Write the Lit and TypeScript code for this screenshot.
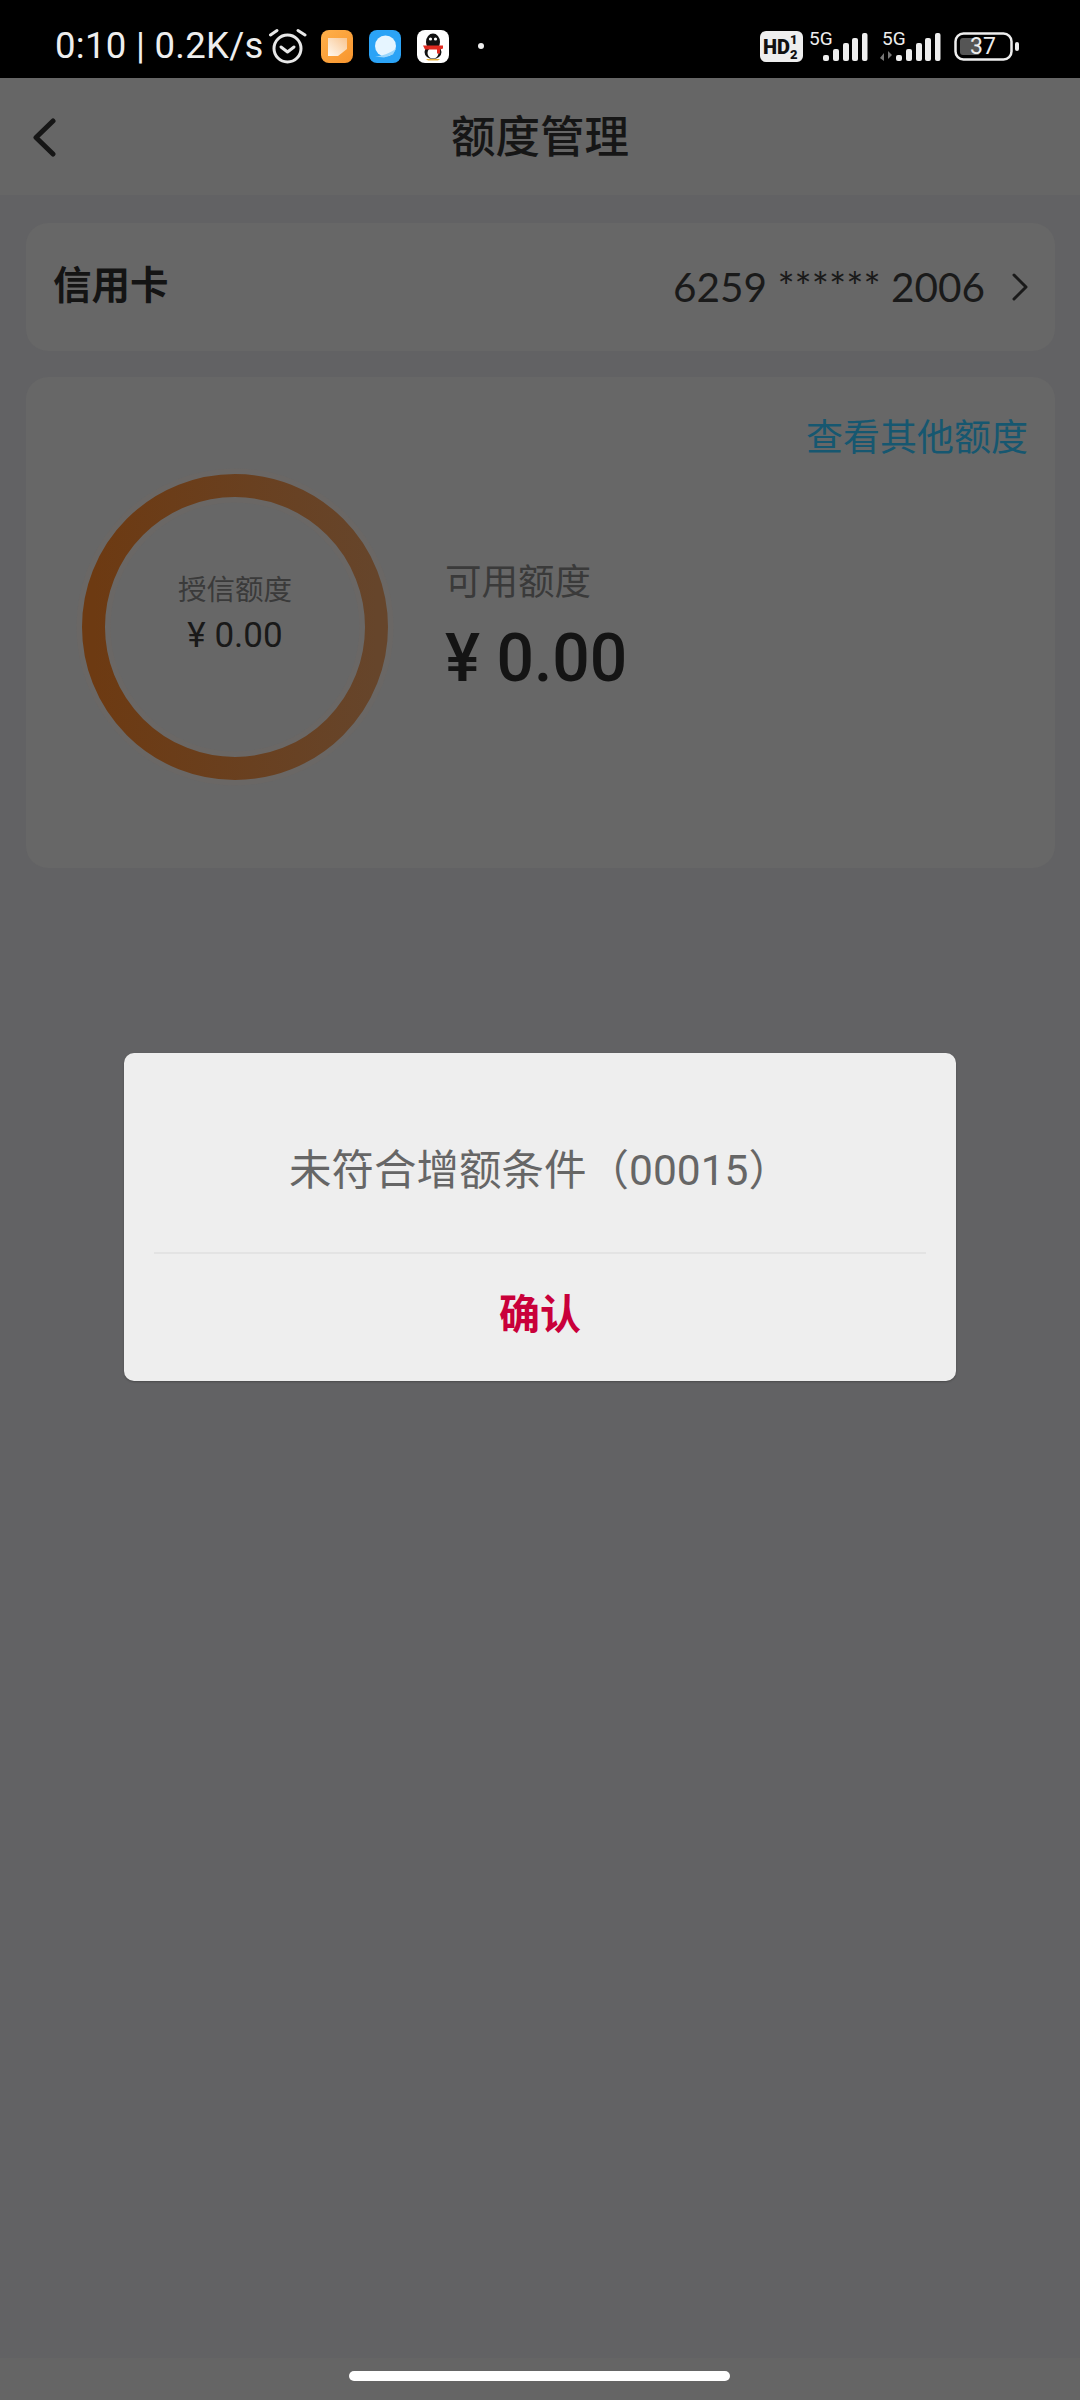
import { LitElement, html, css } from "lit";
import { customElement } from "lit/decorators.js";

@customElement("app-root")
export class AppRoot extends LitElement {
  static styles = css`
    :host { display: block; width: 1080px; height: 2400px; background: #626264; position: relative; overflow: hidden; font-family: "Roboto", "Noto Sans CJK SC", sans-serif; }
    .status { height: 78px; background: #000; color: #eee; display: flex; align-items: center; padding: 14px 52px 0 55px; box-sizing: border-box; }
    .time { font-size: 36.5px; line-height: 44px; letter-spacing: 0.3px; white-space: nowrap; }
    .notif { display: flex; align-items: center; margin-left: 3px; gap: 16px; }
    .notif svg { display: block; }
    .alarm { margin-right: -2px; }
    .dot { margin-left: 12px; }
    .spacer { flex: 1; }
    .sys { display: flex; align-items: center; }
    .sys svg { display: block; }
    .header { height: 117px; background: #666; display: flex; align-items: center; justify-content: center; position: relative; }
    .back { position: absolute; left: 30px; top: 40px; }
    .title { font-size: 44.5px; font-weight: 500; color: #161616; line-height: 60px; margin-top: 2px; }
    .content { padding: 28px 25px 0 26px; display: flex; flex-direction: column; gap: 26px; }
    .card { background: #676767; border-radius: 22px; }
    .card-row { height: 128px; display: flex; align-items: center; padding: 0 27px 0 27px; }
    .card-label { font-size: 38.5px; font-weight: 700; color: #141414; margin-top: -10px; }
    .card-num { font-size: 40.5px; color: #1a1a1a; margin-left: auto; margin-right: 27px; margin-top: -2px; font-family: "Lato", "Roboto", sans-serif; }
    .quota { height: 491px; box-sizing: border-box; padding: 37px 27px 0 30px; }
    .link { text-align: right; font-size: 37px; line-height: 50px; color: #165770; }
    .quota-body { display: flex; align-items: center; margin-top: 10px; }
    .ring { width: 306px; height: 306px; position: relative; margin-left: 26px; flex: none; display: flex; flex-direction: column; align-items: center; }
    .ring svg { position: absolute; inset: 0; overflow: visible; }
    .ring-label { font-size: 28.5px; color: #3a3a3a; line-height: 38px; margin-top: 98px; position: relative; }
    .ring-val { font-size: 35px; color: #191919; line-height: 40px; margin-top: 6px; position: relative; }
    .avail { margin-left: 57px; }
    .avail-label { font-size: 36.5px; line-height: 50px; color: #3a3a3a; }
    .avail-val { font-size: 66px; font-weight: 500; line-height: 76px; color: #141414; margin-top: 13px; }
    .dialog { position: absolute; left: 124px; top: 1053px; width: 832px; height: 328px; background: #eee; border-radius: 10px; box-shadow: 0 1px 2px rgba(0,0,0,.25); display: flex; flex-direction: column; }
    .msg { height: 199px; display: flex; align-items: center; justify-content: center; font-size: 42.5px; color: #666; padding-top: 27px; box-sizing: border-box; }
    .divider { height: 2px; margin: 0 30px; background: #e3e3e3; }
    .btn { flex: 1; display: flex; align-items: center; justify-content: center; font-size: 41px; font-weight: 700; color: #c9003a; padding-bottom: 14px; }
    .gesture { position: absolute; left: 0; right: 0; bottom: 0; height: 42px; background: #656565; display: flex; justify-content: center; padding-top: 13px; box-sizing: border-box; }
    .home { width: 381px; height: 10px; border-radius: 5px; background: #fff; margin-right: 1px; }
  `;

  render() {
    return html`
      <div class="status">
        <span class="time">0:10 | 0.2K/s</span>
        <div class="notif">
          <svg class="alarm" width="40" height="40" viewBox="0 0 40 40" fill="none" stroke="#e8e8e8" stroke-width="3" stroke-linecap="round" stroke-linejoin="round">
            <circle cx="20.5" cy="22.5" r="13.5"/><path d="M14 21l6.5 5 6.5-5"/><path d="M3.5 9L10 4.5M38 9L31 4.5"/>
          </svg>
          <svg width="32" height="33" viewBox="0 0 32 33">
            <defs>
              <linearGradient id="o" x1="0" y1="0" x2="1" y2="1"><stop offset="0" stop-color="#ffb04a"/><stop offset="1" stop-color="#f8952e"/></linearGradient>
              <linearGradient id="p" x1="1" y1="0" x2="0" y2="1"><stop offset="0" stop-color="#f9c590"/><stop offset="1" stop-color="#fff8ee"/></linearGradient>
            </defs>
            <rect width="32" height="33" rx="8" fill="url(#o)"/>
            <path d="M7 8h19v11l-9 7H7z" fill="url(#p)"/>
          </svg>
          <svg width="32" height="33" viewBox="0 0 32 33">
            <rect width="32" height="33" rx="8" fill="#2ba3f6"/>
            <circle cx="16.5" cy="16" r="10.5" fill="#e6f5ff"/><path d="M6 26.5c7-.5 15-3 21-8l-3 6-9 3z" fill="#9bd6fb"/>
          </svg>
          <svg width="32" height="33" viewBox="0 0 32 33">
            <rect width="32" height="33" rx="8" fill="#fff"/>
            <ellipse cx="16" cy="12" rx="7" ry="8.5" fill="#111"/><ellipse cx="16" cy="22" rx="8.5" ry="7" fill="#111"/><ellipse cx="16" cy="23" rx="5.5" ry="5.5" fill="#fff"/>
            <circle cx="13.5" cy="9" r="1.6" fill="#fff"/><circle cx="18.5" cy="9" r="1.6" fill="#fff"/>
            <path d="M6 15.5h20v3l-3 1v4h-3v-4H8z" fill="#e02a20"/><path d="M9 29h14l-2 1.5H11z" fill="#e8b23a"/>
          </svg>
          <svg class="dot" width="8" height="8" viewBox="0 0 8 8"><circle cx="4" cy="4" r="3" fill="#eee"/></svg>
        </div>
        <div class="spacer"></div>
        <div class="sys">
          <svg width="268" height="40" viewBox="0 0 268 40" fill="#eee">
            <rect x="0" y="5" width="43" height="31" rx="6" fill="#eee"/>
            <text x="3" y="28" font-family="Roboto" font-weight="900" font-size="20" fill="#111">HD</text>
            <text x="30" y="18" font-family="Roboto" font-weight="900" font-size="13" fill="#111">1</text>
            <text x="30" y="33" font-family="Roboto" font-weight="900" font-size="13" fill="#111">2</text>
            <text x="49" y="19" font-family="Roboto" font-size="19" fill="#eee">5G</text>
            <rect x="63" y="29" width="6" height="6" rx="2"/><rect x="73" y="23" width="6" height="12" rx="2"/><rect x="83" y="17" width="6" height="18" rx="2"/><rect x="92" y="12" width="6" height="23" rx="2"/><rect x="102" y="7" width="5.5" height="28" rx="2"/>
            <text x="122" y="19" font-family="Roboto" font-size="19" fill="#eee">5G</text>
            <path d="M124 35v-8l-4 5zM128 25v8l4-4z" fill="#777"/>
            <rect x="136" y="29" width="6" height="6" rx="2"/><rect x="146" y="23" width="6" height="12" rx="2"/><rect x="156" y="17" width="6" height="18" rx="2"/><rect x="165" y="12" width="6" height="23" rx="2"/><rect x="175" y="7" width="5.5" height="28" rx="2"/>
            <rect x="195.5" y="7.5" width="56" height="26" rx="8" fill="none" stroke="#eee" stroke-width="2.5"/>
            <rect x="200" y="12" width="20" height="17" rx="3" fill="#555"/>
            <text x="223" y="28" text-anchor="middle" font-family="Roboto" font-size="23" fill="#eee">37</text>
            <rect x="255" y="16" width="4" height="9" rx="2"/>
          </svg>
        </div>
      </div>
      <div class="header">
        <svg class="back" width="30" height="40" viewBox="0 0 30 40" fill="none" stroke="#161616" stroke-width="5" stroke-linecap="round" stroke-linejoin="round"><path d="M23 3L6 19.5l17 16.5"/></svg>
        <span class="title">额度管理</span>
      </div>
      <div class="content">
        <div class="card card-row">
          <span class="card-label">信用卡</span>
          <span class="card-num">6259 ****** 2006</span>
          <svg width="16" height="28" viewBox="0 0 16 28" fill="none" stroke="#1a1a1a" stroke-width="3" stroke-linecap="round" stroke-linejoin="round"><path d="M2 2l12 12L2 26"/></svg>
        </div>
        <div class="card quota">
          <div class="link">查看其他额度</div>
          <div class="quota-body">
            <div class="ring">
              <svg width="306" height="306" viewBox="0 0 306 306">
                <defs><linearGradient id="r" x1="0" y1="0" x2="1" y2="0"><stop offset="0" stop-color="#6d3a12"/><stop offset="1" stop-color="#66452b"/></linearGradient></defs>
                <circle cx="153" cy="153" r="141.5" fill="none" stroke="#6a6765" stroke-width="34"/>
                <circle cx="153" cy="153" r="141.5" fill="none" stroke="url(#r)" stroke-width="23"/>
              </svg>
              <div class="ring-label">授信额度</div>
              <div class="ring-val">¥ 0.00</div>
            </div>
            <div class="avail">
              <div class="avail-label">可用额度</div>
              <div class="avail-val">¥ 0.00</div>
            </div>
          </div>
        </div>
      </div>
      <div class="dialog">
        <div class="msg">未符合增额条件（00015）</div>
        <div class="divider"></div>
        <div class="btn">确认</div>
      </div>
      <div class="gesture"><div class="home"></div></div>
    `;
  }
}
